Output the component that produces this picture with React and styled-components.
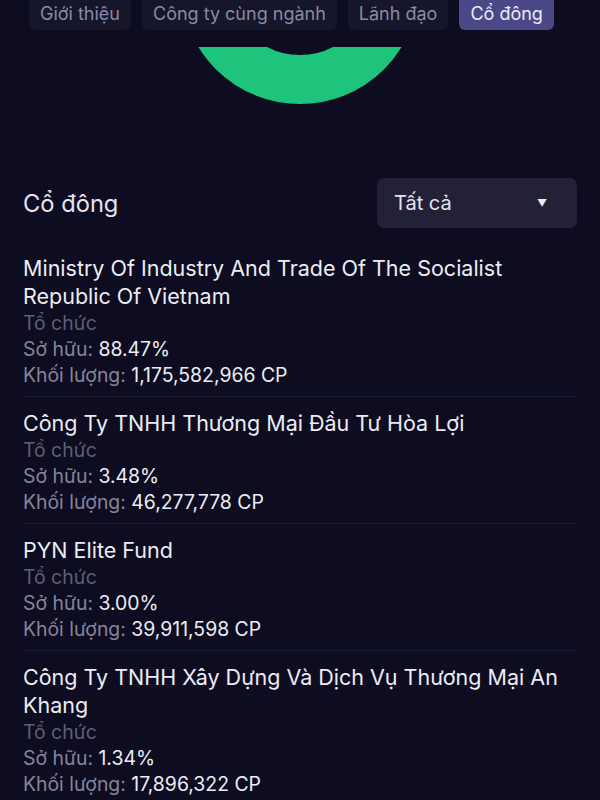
import styled, { createGlobalStyle } from "styled-components";

const GlobalStyle = createGlobalStyle`
	html, body {
		margin: 0;
		padding: 0;
		background: #0d0c20;
	}
	body {
		font-family: Inter, "Noto Sans", "Liberation Sans", sans-serif;
		color: #ececf3;
	}
`;

const tabs = ["Giới thiệu", "Công ty cùng ngành", "Lãnh đạo", "Cổ đông"];

const holders = [
	{
		name: "Ministry Of Industry And Trade Of The Socialist Republic Of Vietnam",
		type: "Tổ chức",
		share: "88.47%",
		volume: "1,175,582,966 CP",
	},
	{
		name: "Công Ty TNHH Thương Mại Đầu Tư Hòa Lợi",
		type: "Tổ chức",
		share: "3.48%",
		volume: "46,277,778 CP",
	},
	{
		name: "PYN Elite Fund",
		type: "Tổ chức",
		share: "3.00%",
		volume: "39,911,598 CP",
	},
	{
		name: "Công Ty TNHH Xây Dựng Và Dịch Vụ Thương Mại An Khang",
		type: "Tổ chức",
		share: "1.34%",
		volume: "17,896,322 CP",
	},
];

const App = () => {
	return (
		<Page>
			<GlobalStyle />
			<TabBar>
				<TabRow>
					{tabs.map((tab, i) => (
						<Tab key={tab} $active={i === tabs.length - 1}>
							{tab}
						</Tab>
					))}
				</TabRow>
			</TabBar>

			<ChartArea>
				{/* only the lower half of the donut peeks out under the tabs */}
				<svg width="240" height="58" viewBox="0 0 240 58">
					<circle
						cx="120"
						cy="-62"
						r="94.5"
						fill="none"
						stroke="#1ec47b"
						strokeWidth="49"
					/>
				</svg>
			</ChartArea>

			<SectionHeader>
				<SectionTitle>Cổ đông</SectionTitle>
				<Select>
					<span>Tất cả</span>
					<Caret>▼</Caret>
				</Select>
			</SectionHeader>

			<HolderList>
				{holders.map((h) => (
					<HolderItem key={h.name}>
						<HolderName>{h.name}</HolderName>
						<HolderType>{h.type}</HolderType>
						<InfoLine>
							Sở hữu: <Value>{h.share}</Value>
						</InfoLine>
						<InfoLine>
							Khối lượng: <Value>{h.volume}</Value>
						</InfoLine>
					</HolderItem>
				))}
			</HolderList>
		</Page>
	);
};

export default App;

const Page = styled.div`
	width: 600px;
	min-height: 800px;
	background: #0d0c20;
	overflow: hidden;
`;

const TabBar = styled.div`
	height: 47px;
	overflow: hidden;
	background: #0d0c20;
`;

const TabRow = styled.div`
	display: flex;
	gap: 11px;
	padding: 0 29px;
	margin-top: -14px;
`;

const Tab = styled.div`
	height: 44px;
	padding: 10px 11px 0;
	box-sizing: border-box;
	display: flex;
	align-items: center;
	border-radius: 6px;
	font-size: 18px;
	white-space: nowrap;
	background: ${(p) => (p.$active ? "#4a4886" : "#15152b")};
	color: ${(p) => (p.$active ? "#ececf6" : "#8b8aa2")};
`;

const ChartArea = styled.div`
	height: 131px;
	display: flex;
	justify-content: center;
	align-items: flex-start;
`;

const SectionHeader = styled.div`
	display: flex;
	justify-content: space-between;
	align-items: center;
	padding: 0 23px;
`;

const SectionTitle = styled.div`
	font-size: 23.7px;
	color: #e4e4ee;
`;

const Select = styled.div`
	width: 200px;
	height: 50px;
	box-sizing: border-box;
	padding: 0 30px 0 17px;
	display: flex;
	align-items: center;
	justify-content: space-between;
	background: #222138;
	border-radius: 7px;
	font-size: 20px;
	color: #e4e4ee;
`;

const Caret = styled.span`
	font-size: 10px;
	color: #ececf3;
`;

const HolderList = styled.div`
	margin-top: 14px;
	padding: 0 23px;
`;

const HolderItem = styled.div`
	padding: 12px 0 8px;
	border-bottom: 1px solid #1c1b34;

	&:last-child {
		border-bottom: none;
	}
`;

const HolderName = styled.div`
	font-size: 21.5px;
	line-height: 28px;
	color: #ececf3;
`;

const HolderType = styled.div`
	font-size: 19.4px;
	line-height: 26px;
	color: #5f5e76;
`;

const InfoLine = styled.div`
	font-size: 19.4px;
	line-height: 26px;
	color: #85849b;
`;

const Value = styled.span`
	color: #ececf3;
`;
